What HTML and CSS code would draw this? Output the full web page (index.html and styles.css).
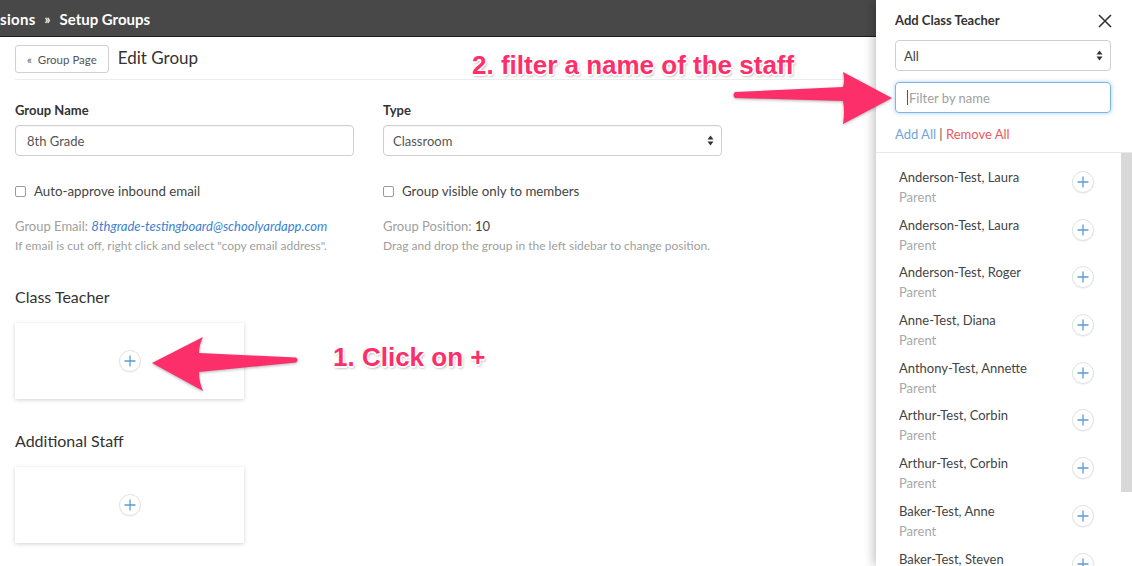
FILE: index.html
```html
<!DOCTYPE html>
<html lang="en">
<head>
<meta charset="utf-8">
<title>Edit Group</title>
<link rel="stylesheet" href="styles.css">
</head>
<body>
<div class="page">
  <main class="main">
    <div class="topbar">
      <span class="crumb cut">sions</span>
      <span class="sep">&raquo;</span>
      <span class="crumb">Setup Groups</span>
    </div>
    <div class="content">
      <div class="header">
        <button class="back">&laquo;&nbsp; Group Page</button>
        <h1 class="title">Edit Group</h1>
      </div>
      <div class="form-grid">
        <div class="col">
          <div class="lbl">Group Name</div>
          <div class="field">8th Grade</div>
          <div class="check"><span class="box"></span>Auto-approve inbound email</div>
          <div class="meta">Group Email: <a class="mail">8thgrade-testingboard@schoolyardapp.com</a></div>
          <div class="note">If email is cut off, right click and select "copy email address".</div>
        </div>
        <div class="col">
          <div class="lbl">Type</div>
          <div class="field select">Classroom
            <svg class="updown" width="7" height="11" viewBox="0 0 7 11"><path d="M3.5 0.5 L6.5 4.5 L0.5 4.5 Z M3.5 10.5 L6.5 6.5 L0.5 6.5 Z" fill="#333"/></svg>
          </div>
          <div class="check"><span class="box"></span>Group visible only to members</div>
          <div class="meta">Group Position: <span class="pos">10</span></div>
          <div class="note">Drag and drop the group in the left sidebar to change position.</div>
        </div>
      </div>
      <h2 class="section">Class Teacher</h2>
      <div class="card"><span class="plus"><svg width="12" height="12" viewBox="0 0 12 12"><path d="M6 0.5V11.5M0.5 6H11.5" stroke="#5b9bd5" stroke-width="1.3"/></svg></span></div>
      <h2 class="section">Additional Staff</h2>
      <div class="card"><span class="plus"><svg width="12" height="12" viewBox="0 0 12 12"><path d="M6 0.5V11.5M0.5 6H11.5" stroke="#5b9bd5" stroke-width="1.3"/></svg></span></div>
    </div>
  </main>

  <aside class="panel">
    <div class="panel-top">
      <div class="panel-head">
        <span class="panel-title">Add Class Teacher</span>
        <svg class="close" width="14" height="14" viewBox="0 0 14 14"><path d="M1 1L13 13M13 1L1 13" stroke="#333" stroke-width="1.6"/></svg>
      </div>
      <div class="pfield select">All
        <svg class="updown" width="7" height="11" viewBox="0 0 7 11"><path d="M3.5 0.5 L6.5 4.5 L0.5 4.5 Z M3.5 10.5 L6.5 6.5 L0.5 6.5 Z" fill="#333"/></svg>
      </div>
      <div class="pfield filter"><span class="caret"></span>Filter by name</div>
      <div class="bulk"><a class="add-all">Add All</a> | <a class="remove-all">Remove All</a></div>
    </div>
    <div class="list-wrap">
      <ul class="list">
        <li class="item"><div><div class="name">Anderson-Test, Laura</div><div class="role">Parent</div></div><span class="plus"><svg width="12" height="12" viewBox="0 0 12 12"><path d="M6 0.5V11.5M0.5 6H11.5" stroke="#5b9bd5" stroke-width="1.3"/></svg></span></li>
        <li class="item"><div><div class="name">Anderson-Test, Laura</div><div class="role">Parent</div></div><span class="plus"><svg width="12" height="12" viewBox="0 0 12 12"><path d="M6 0.5V11.5M0.5 6H11.5" stroke="#5b9bd5" stroke-width="1.3"/></svg></span></li>
        <li class="item"><div><div class="name">Anderson-Test, Roger</div><div class="role">Parent</div></div><span class="plus"><svg width="12" height="12" viewBox="0 0 12 12"><path d="M6 0.5V11.5M0.5 6H11.5" stroke="#5b9bd5" stroke-width="1.3"/></svg></span></li>
        <li class="item"><div><div class="name">Anne-Test, Diana</div><div class="role">Parent</div></div><span class="plus"><svg width="12" height="12" viewBox="0 0 12 12"><path d="M6 0.5V11.5M0.5 6H11.5" stroke="#5b9bd5" stroke-width="1.3"/></svg></span></li>
        <li class="item"><div><div class="name">Anthony-Test, Annette</div><div class="role">Parent</div></div><span class="plus"><svg width="12" height="12" viewBox="0 0 12 12"><path d="M6 0.5V11.5M0.5 6H11.5" stroke="#5b9bd5" stroke-width="1.3"/></svg></span></li>
        <li class="item"><div><div class="name">Arthur-Test, Corbin</div><div class="role">Parent</div></div><span class="plus"><svg width="12" height="12" viewBox="0 0 12 12"><path d="M6 0.5V11.5M0.5 6H11.5" stroke="#5b9bd5" stroke-width="1.3"/></svg></span></li>
        <li class="item"><div><div class="name">Arthur-Test, Corbin</div><div class="role">Parent</div></div><span class="plus"><svg width="12" height="12" viewBox="0 0 12 12"><path d="M6 0.5V11.5M0.5 6H11.5" stroke="#5b9bd5" stroke-width="1.3"/></svg></span></li>
        <li class="item"><div><div class="name">Baker-Test, Anne</div><div class="role">Parent</div></div><span class="plus"><svg width="12" height="12" viewBox="0 0 12 12"><path d="M6 0.5V11.5M0.5 6H11.5" stroke="#5b9bd5" stroke-width="1.3"/></svg></span></li>
        <li class="item"><div><div class="name">Baker-Test, Steven</div><div class="role">Parent</div></div><span class="plus"><svg width="12" height="12" viewBox="0 0 12 12"><path d="M6 0.5V11.5M0.5 6H11.5" stroke="#5b9bd5" stroke-width="1.3"/></svg></span></li>
      </ul>
      <div class="scrollbar"><div class="thumb"></div></div>
    </div>
  </aside>

  <svg class="arrows" width="1132" height="566" viewBox="0 0 1132 566">
    <path d="M152 363 L203 337 Q199 345 199 353 L296 357.5 Q299 360 296 362.5 L199 372 Q199 382 203 391 Z" fill="#fd2f6b"/>
    <path d="M892 98 L843 72 Q845 80 843 87 L735 92 Q732 95 735 98 L843 101 Q845 112 843 124 Z" fill="#fd2f6b"/>
  </svg>
  <div class="callout callout-1">1. Click on +</div>
  <div class="callout callout-2">2. filter a name of the staff</div>
</div>
</body>
</html>
```

FILE: styles.css
```css
* { box-sizing: border-box; }
html, body { margin: 0; padding: 0; background: #fff; }
body { font-family: Lato, "Open Sans", Arial, sans-serif; color: #333; }

.page {
  position: relative;
  display: flex;
  width: 1132px;
  height: 566px;
  overflow: hidden;
  background: #fff;
}

.main { width: 876px; flex: none; }

.topbar {
  height: 37px;
  background: #484848;
  border-bottom: 1px solid #1c1c1c;
  display: flex;
  align-items: center;
  gap: 9px;
  padding-top: 1px;
  color: #fff;
  font-weight: 700;
  font-size: 15px;
  overflow: hidden;
}
.crumb.cut { margin-left: 0; letter-spacing: 0.3px; }
.sep { font-size: 13px; }

.content { padding: 0 15px; }

.header {
  display: flex;
  align-items: center;
  gap: 9px;
  padding: 8px 0 6px;
  border-bottom: 1px solid #ececec;
}
.back {
  height: 28px;
  padding: 0 11px;
  border: 1px solid #d0d0d0;
  border-radius: 3px;
  background: #fff;
  font-family: Lato, Arial, sans-serif;
  font-size: 11.5px;
  color: #555;
}
.title { margin: 0 0 3px; font-size: 17px; font-weight: 400; color: #333; }

.form-grid {
  display: grid;
  grid-template-columns: 339px 339px;
  column-gap: 29px;
  margin-top: 21px;
}
.lbl { font-size: 13px; font-weight: 700; line-height: 18px; color: #333; }
.field {
  margin-top: 6px;
  height: 31px;
  border: 1px solid #cfcfcf;
  border-radius: 4px;
  display: flex;
  align-items: center;
  padding: 0 11px;
  font-size: 13px;
  color: #555;
  box-shadow: inset 0 1px 1px rgba(0,0,0,0.04);
}
.select { justify-content: space-between; padding-left: 9px; }
.select .updown { margin-right: -4px; }
.check {
  margin-top: 26px;
  display: flex;
  align-items: center;
  gap: 8px;
  font-size: 13.3px;
  line-height: 18px;
  color: #444;
}
.box {
  width: 11px; height: 11px;
  border: 1px solid #9a9a9a;
  border-radius: 2px;
  background: #fff;
}
.meta { margin-top: 17px; font-size: 13px; line-height: 18px; color: #9e9e9e; }
.mail { color: #3b7fd0; font-style: italic; }
.pos { color: #444; }
.note { margin-top: 3px; font-size: 12px; line-height: 16px; color: #9e9e9e; }

.section { margin: 32px 0 0; font-size: 16px; line-height: 22px; font-weight: 400; color: #333; }
.card {
  margin-top: 15px;
  width: 229px;
  height: 76px;
  background: #fff;
  box-shadow: 0 1px 4px rgba(0,0,0,0.18);
  display: flex;
  align-items: center;
  justify-content: center;
}
.card + .section { margin-top: 31px; }

.plus {
  width: 22px; height: 22px;
  border-radius: 50%;
  border: 1px solid #e2e2e2;
  box-shadow: 0 1px 1px rgba(0,0,0,0.05);
  display: inline-flex;
  align-items: center;
  justify-content: center;
  background: #fff;
  flex: none;
}

/* right panel */
.panel {
  width: 256px;
  flex: none;
  height: 566px;
  background: #fff;
  box-shadow: -3px 0 9px rgba(0,0,0,0.22);
  display: flex;
  flex-direction: column;
  position: relative;
  z-index: 1;
}
.panel-top {
  padding: 10px 21px 10px 19px;
  border-bottom: 1px solid #e8e8e8;
}
.panel-head {
  height: 20px;
  display: flex;
  align-items: center;
  justify-content: space-between;
}
.panel-title { font-size: 13px; font-weight: 700; color: #333; }
.close { margin-right: -1px; margin-top: 1px; }
.pfield {
  height: 31px;
  border: 1px solid #cfcfcf;
  border-radius: 4px;
  display: flex;
  align-items: center;
  padding: 0 11px 0 8px;
  font-size: 13px;
  color: #444;
  margin-top: 10px;
}
.pfield.select { padding-right: 11px; }
.pfield.filter {
  margin-top: 11px;
  border-color: #7fb4e6;
  box-shadow: 0 0 4px rgba(102,175,233,0.6);
  color: #a0a0a0;
  padding-left: 11px;
}
.caret { width: 1px; height: 15px; background: #555; margin-right: 1px; }
.bulk { margin-top: 13px; font-size: 13px; line-height: 16px; color: #555; }
.add-all { color: #6ea6dc; }
.remove-all { color: #ea5a5c; }

.list-wrap { flex: 1; display: flex; min-height: 0; }
.list {
  list-style: none;
  margin: 0;
  padding: 14px 0 0 23px;
  flex: 1;
  overflow: hidden;
}
.item {
  height: 47.7px;
  display: flex;
  justify-content: space-between;
  align-items: flex-start;
  padding-right: 27px;
}
.item .plus { margin-top: 4px; }
.name { font-size: 13px; line-height: 20px; color: #444; }
.role { font-size: 13px; line-height: 20px; color: #a8a8a8; }
.scrollbar { width: 11px; flex: none; background: #fff; }
.thumb { height: 339px; background: #d8d8d8; }

/* annotations */
.arrows {
  position: absolute;
  left: 0; top: 0;
  z-index: 5;
  pointer-events: none;
  filter: drop-shadow(0 1px 1.5px rgba(0,0,0,0.3));
}
.callout {
  position: absolute;
  z-index: 6;
  font-family: "Liberation Sans", Arial, sans-serif;
  font-weight: 700;
  font-size: 26px;
  line-height: 30px;
  color: #fd2f6b;
  white-space: nowrap;
  text-shadow: -1px -1px 0 #fff, 1px -1px 0 #fff, -1px 1px 0 #fff, 1px 1px 0 #fff,
               0 -1.5px 0 #fff, 0 1.5px 0 #fff, -1.5px 0 0 #fff, 1.5px 0 0 #fff,
               1px 2px 3px rgba(0,0,0,0.45);
}
.callout-1 { left: 333px; top: 342px; }
.callout-2 { left: 472px; top: 50px; }
```
